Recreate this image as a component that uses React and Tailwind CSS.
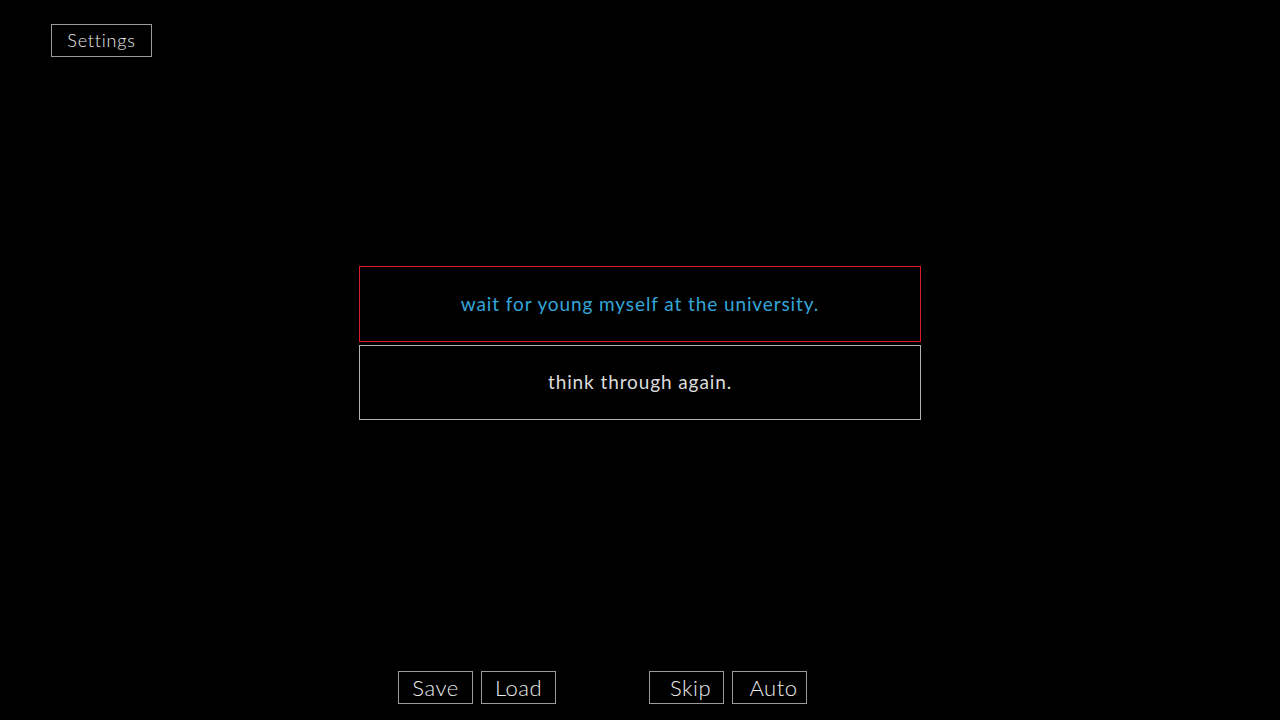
import React from 'react';

const font = { fontFamily: 'Lato, "Noto Sans", sans-serif' };

const MenuButton = ({ label, className = '' }) => (
  <button
    className={`h-[33px] w-[75px] border border-[#9a9a9a] bg-black text-[22px] font-light leading-none tracking-[0.5px] text-[#ececec] ${className}`}
  >
    {label}
  </button>
);

const App = () => {
  return (
    <div className="flex h-[720px] w-full flex-col bg-black" style={font}>
      {/* Settings */}
      <div className="pl-[51px] pt-[24px]">
        <button className="h-[33px] w-[101px] border border-[#9a9a9a] pb-[1px] text-[18px] font-light leading-none tracking-[0.8px] text-[#ececec]">
          Settings
        </button>
      </div>

      {/* Choices */}
      <div className="mx-auto mt-[209px] flex w-[562px] flex-col gap-[3px]">
        <button className="flex h-[76px] items-center justify-center border border-[#e01c24] text-[19px] font-normal tracking-[0.9px] text-[#34a6d8]">
          wait for young myself at the university.
        </button>
        <button className="flex h-[75px] items-center justify-center border border-[#b0b0b0] text-[19px] font-normal tracking-[0.9px] text-[#dcdcdc]">
          think through again.
        </button>
      </div>

      <div className="flex-1" />

      {/* Bottom menu */}
      <div className="flex pb-[16px] pl-[398px]">
        <div className="flex gap-[8px]">
          <MenuButton label="Save" />
          <MenuButton label="Load" />
        </div>
        <div className="ml-[93px] flex gap-[8px]">
          <MenuButton label="Skip" className="pl-[8px]" />
          <MenuButton label="Auto" className="pl-[8px]" />
        </div>
      </div>
    </div>
  );
};

export default App;
